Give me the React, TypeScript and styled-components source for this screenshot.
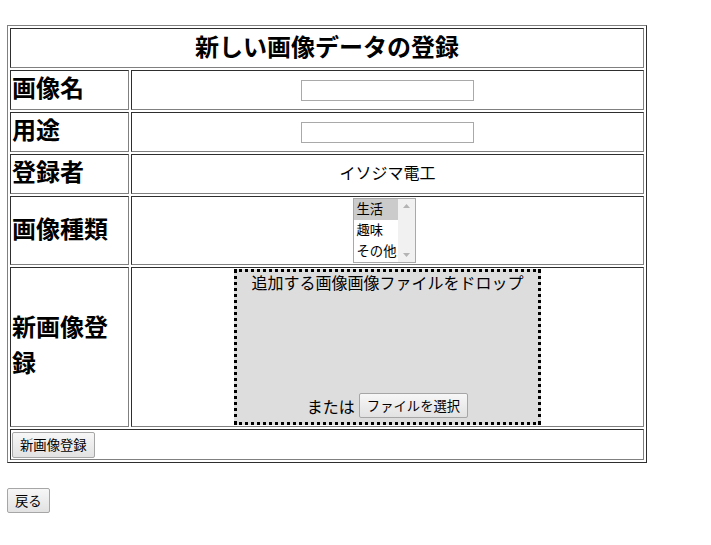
import React from "react";
import styled, { createGlobalStyle } from "styled-components";

const GlobalStyle = createGlobalStyle`
  body {
    margin: 0;
    background: #ffffff;
    color: #000000;
    font-family: "Noto Sans CJK JP", "Noto Sans", sans-serif;
  }
`;

const Page = styled.div`
  padding: 25px 7px;
`;

const FormTable = styled.table`
  width: 640px;
  border-collapse: separate;
  border-spacing: 2px;
  border: 1px solid;
  border-color: #808080 #2e2e2e #2e2e2e #808080;
`;

const cellBorder = `
  border: 1px solid;
  border-color: #2e2e2e #808080 #808080 #2e2e2e;
  padding: 1px;
`;

const TitleCell = styled.th`
  ${cellBorder}
  height: 36px;
  font-size: 24px;
  line-height: 36px;
  font-weight: 700;
  text-align: center;
`;

const LabelCell = styled.th`
  ${cellBorder}
  width: 115px;
  font-size: 24px;
  line-height: 36px;
  font-weight: 700;
  text-align: left;
  vertical-align: middle;
`;

const ValueCell = styled.td`
  ${cellBorder}
  font-size: 16px;
  line-height: 22px;
  text-align: center;
  vertical-align: middle;
`;

const FooterCell = styled.td`
  ${cellBorder}
  text-align: left;
`;

/* Noto sits lower in its line box than the original font; lift the text */
const Lift = styled.span<{ $by: number }>`
  display: block;
  margin-top: ${(p) => -p.$by}px;
  margin-bottom: ${(p) => p.$by}px;
`;

const TextInput = styled.input`
  display: block;
  margin: 0 auto;
  width: 173px;
  height: 21px;
  box-sizing: border-box;
  border: 1px solid #a9a9a9;
  padding: 1px 2px;
  font: 13.33px "Noto Sans CJK JP", sans-serif;
`;

const ListWrap = styled.div`
  display: flex;
  justify-content: center;
  padding-right: 7px;
`;

const ListBox = styled.div`
  display: flex;
  width: 63px;
  height: 65px;
  box-sizing: border-box;
  border: 1px solid #a9a9a9;
  background: #ffffff;
`;

const OptionList = styled.div`
  flex: 1;
  display: flex;
  flex-direction: column;
`;

const Option = styled.div<{ $selected?: boolean }>`
  height: 21px;
  padding-left: 3px;
  font-size: 13.33px;
  line-height: 20px;
  text-align: left;
  white-space: nowrap;
  background: ${(p) => (p.$selected ? "#cbcbcb" : "transparent")};
`;

const ScrollTrack = styled.div`
  width: 17px;
  display: flex;
  flex-direction: column;
  justify-content: space-between;
  align-items: center;
  background: #f1f1f1;
  padding: 5px 0;
  box-sizing: border-box;
`;

const DropZone = styled.div`
  width: 307px;
  height: 156px;
  box-sizing: border-box;
  margin: 0 auto;
  border: 3px dotted #000000;
  background: #dddddd;
  display: flex;
  flex-direction: column;
  justify-content: space-between;
  align-items: center;
  padding-bottom: 4px;
  font-size: 16px;
  line-height: 22px;
`;

const PickRow = styled.div`
  display: flex;
  align-items: center;
  gap: 4px;
`;

const Button = styled.button<{ $tall?: boolean }>`
  height: ${(p) => (p.$tall ? "26px" : "25px")};
  padding: 0 7px;
  border: 1px solid #a6a6a6;
  border-radius: 2px;
  background: linear-gradient(#f7f7f7, #e2e2e2);
  color: #000000;
  font: 13.33px "Noto Sans CJK JP", sans-serif;
  line-height: 19px;
`;

const BackRow = styled.div`
  margin-top: 24px;
`;

const Arrow = ({ up }: { up?: boolean }) => (
  <svg width="7" height="4" viewBox="0 0 7 4">
    <path d={up ? "M0 4 L3.5 0 L7 4 Z" : "M0 0 L3.5 4 L7 0 Z"} fill="#b4b4b4" />
  </svg>
);

const kinds = ["生活", "趣味", "その他"];

export default function App() {
  return (
    <>
      <GlobalStyle />
      <Page>
        <FormTable>
          <tbody>
            <tr>
              <TitleCell colSpan={2}>
                <Lift $by={2}>新しい画像データの登録</Lift>
              </TitleCell>
            </tr>
            <tr>
              <LabelCell>
                <Lift $by={3}>画像名</Lift>
              </LabelCell>
              <ValueCell>
                <TextInput type="text" />
              </ValueCell>
            </tr>
            <tr>
              <LabelCell>
                <Lift $by={3}>用途</Lift>
              </LabelCell>
              <ValueCell>
                <TextInput type="text" />
              </ValueCell>
            </tr>
            <tr>
              <LabelCell>
                <Lift $by={3}>登録者</Lift>
              </LabelCell>
              <ValueCell>
                <Lift $by={2}>イソジマ電工</Lift>
              </ValueCell>
            </tr>
            <tr>
              <LabelCell>
                <Lift $by={3}>画像種類</Lift>
              </LabelCell>
              <ValueCell>
                <ListWrap>
                  <ListBox>
                    <OptionList>
                      {kinds.map((k, i) => (
                        <Option key={k} $selected={i === 0}>
                          {k}
                        </Option>
                      ))}
                    </OptionList>
                    <ScrollTrack>
                      <Arrow up />
                      <Arrow />
                    </ScrollTrack>
                  </ListBox>
                </ListWrap>
              </ValueCell>
            </tr>
            <tr>
              <LabelCell>
                <Lift $by={3}>新画像登録</Lift>
              </LabelCell>
              <ValueCell>
                <DropZone>
                  <Lift $by={1}>追加する画像画像ファイルをドロップ</Lift>
                  <PickRow>
                    <span>または</span>
                    <Button type="button">ファイルを選択</Button>
                  </PickRow>
                </DropZone>
              </ValueCell>
            </tr>
            <tr>
              <FooterCell colSpan={2}>
                <Button type="button" $tall>
                  新画像登録
                </Button>
              </FooterCell>
            </tr>
          </tbody>
        </FormTable>
        <BackRow>
          <Button type="button">戻る</Button>
        </BackRow>
      </Page>
    </>
  );
}
